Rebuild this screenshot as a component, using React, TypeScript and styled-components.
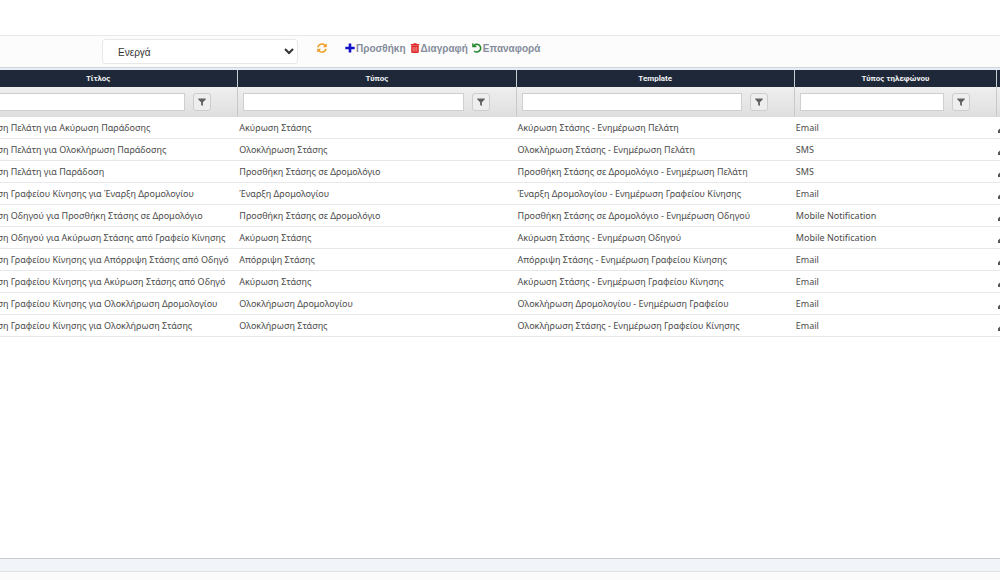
import React, { useState } from "react";
import styled, { createGlobalStyle } from "styled-components";

const GlobalStyle = createGlobalStyle`
  * { box-sizing: border-box; }
  body { margin: 0; background: #fff; font-family: "Liberation Sans", sans-serif; }
`;

const Page = styled.div`
  display: flex;
  flex-direction: column;
  min-height: 100vh;
`;

const TopBar = styled.header`
  height: 35px;
  background: #fff;
`;

const Toolbar = styled.div`
  display: flex;
  align-items: center;
  height: 33px;
  padding: 0 16px 0 102px;
  background: #fcfcfc;
  border-top: 1px solid #e9e9ea;
  border-bottom: 1px solid #d3d6da;
`;

const StatusSelect = styled.select`
  width: 196px;
  height: 25px;
  margin-right: 19px;
  padding: 1px 0 0 11px;
  border: 1px solid #e8e8ea;
  border-radius: 3px;
  background: #fff;
  color: #333;
  font: 10px "Liberation Sans", sans-serif;
`;

const ToolButton = styled.button<{ $gap: number }>`
  display: flex;
  align-items: center;
  gap: 1px;
  height: 24px;
  margin: 0 ${(p) => p.$gap}px 7px 0;
  padding: 0;
  border: 0;
  background: none;
  color: #858c9b;
  font: bold 10px "Liberation Sans", sans-serif;
  cursor: pointer;
`;

const GridArea = styled.main`
  flex: 1;
  overflow: hidden;
  border-top: 2px solid #e6edf4;
`;

const Grid = styled.table`
  width: calc(100% + 58px);
  margin-left: -41px;
  table-layout: fixed;
  border-collapse: separate;
  border-spacing: 0;
`;

const Col = styled.col<{ $width?: string }>`
  width: ${(p) => p.$width ?? "auto"};
`;

const HeadCell = styled.th`
  height: 17px;
  padding: 0;
  background: #1e2838;
  border-right: 1px solid #c9ced5;
  color: #f1f3f5;
  font: bold 8px/16px Roboto, sans-serif;
  text-align: center;
`;

const FilterCell = styled.td`
  height: 30px;
  padding: 0 26px 0 5px;
  background: linear-gradient(#efefef, #dfdfdf);
  border-right: 1px solid #c8c8c8;
  border-bottom: 1px solid #dcdcdc;
`;

const FilterRow = styled.div`
  display: flex;
  align-items: center;
  gap: 8px;
`;

const FilterInput = styled.input`
  flex: 1;
  min-width: 0;
  height: 18px;
  padding: 0 4px;
  border: 1px solid #cfcfcf;
  background: #fff;
  font: 9px "Noto Sans", sans-serif;
`;

const FilterButton = styled.button`
  display: flex;
  align-items: center;
  justify-content: center;
  width: 18px;
  height: 18px;
  padding: 0;
  border: 1px solid #cdcdcd;
  border-radius: 3px;
  background: #eeeeee;
  cursor: pointer;
`;

const Cell = styled.td`
  height: 22px;
  padding: 0 1px;
  border-bottom: 1px solid #e6e8ea;
  color: #4b4b4b;
  font: 9px/20px "Noto Sans", sans-serif;
  white-space: nowrap;
  overflow: hidden;
`;

const EditButton = styled.button`
  display: flex;
  padding: 2px 0 0;
  border: 0;
  background: none;
  color: #555;
`;

const StatusStrip = styled.div`
  height: 14px;
  background: #f1f4f9;
  border-top: 1px solid #c9cbce;
  border-bottom: 1px solid #dfe1e4;
`;

const Footer = styled.footer`
  height: 8px;
  background: #fbfbfb;
`;

const RefreshIcon = () => (
  <svg width="10" height="10" viewBox="0 0 512 512" fill="#f0a02c" aria-hidden="true">
    <path d="M371 134c-32-30-72-46-115-46-78 0-145 53-163 127-2 5-6 9-12 9H24c-8 0-13-7-12-14C33 94 134 8 256 8c66 0 127 26 171 68l36-35c15-15 41-5 41 17v134c0 13-11 24-24 24H346c-22 0-32-26-17-41zM32 296h134c22 0 32 26 17 41l-42 41c32 30 72 46 115 46 78 0 145-53 163-127 2-5 6-9 12-9h57c8 0 13 7 12 14-21 116-122 202-244 202-66 0-127-26-171-68l-36 35c-15 15-41 5-41-17V320c0-13 11-24 24-24z" />
  </svg>
);

const PlusIcon = () => (
  <svg width="10" height="10" viewBox="0 0 10 10" fill="#1111cc" aria-hidden="true">
    <path d="M4 .5h2q.3 0 .3.3v2.9h3q.4 0 .4.3v2q0 .3-.4.3h-3v2.9q0 .3-.3.3H4q-.3 0-.3-.3V6.3H.7q-.4 0-.4-.3V4q0-.3.4-.3h3V.8q0-.3.3-.3z" />
  </svg>
);

const TrashIcon = () => (
  <svg width="10" height="10" viewBox="0 0 10 10" aria-hidden="true">
    <path fill="#e02828" d="M.7 1h2.5l.5-.8h2.6l.5.8h2.5v1.2H.7zM1.2 2.6h7.6v6.5q0 .8-.8.8H2q-.8 0-.8-.8z" />
    <path stroke="#f7b4b4" strokeWidth=".7" d="M3.2 4v4.6M5 4v4.6M6.8 4v4.6" />
  </svg>
);

const UndoIcon = () => (
  <svg width="10" height="10" viewBox="0 0 10 10" fill="none" aria-hidden="true">
    <path fill="#24862f" d="M.2.3h1.2v2.4h3v1.6H.6q-.4 0-.4-.4z" />
    <path stroke="#24862f" strokeWidth="1.6" d="M1.4 3.2A3.9 3.9 0 1 1 2.1 8" />
  </svg>
);

const FunnelIcon = () => (
  <svg width="8" height="8" viewBox="0 0 8 8" fill="#606060" aria-hidden="true">
    <path d="M.3.5h7.4v1L4.9 4.2V8L3.1 7V4.2L.3 1.5z" />
  </svg>
);

const PencilIcon = () => (
  <svg width="9" height="9" viewBox="0 0 9 9" fill="currentColor" aria-hidden="true">
    <path d="M0 9V6.6L5.6 1 8 3.4 2.4 9zM6.2.5Q6.8 0 7.4.5l1.1 1.1q.5.6 0 1.2z" />
  </svg>
);

const columns = ["Τίτλος", "Τύπος", "Template", "Τύπος τηλεφώνου"];
const columnWidths = ["26.4%", "26.3%", "26.3%"];

const rows = [
  ["Ενημέρωση Πελάτη για Ακύρωση Παράδοσης", "Ακύρωση Στάσης", "Ακύρωση Στάσης - Ενημέρωση Πελάτη", "Email"],
  ["Ενημέρωση Πελάτη για Ολοκλήρωση Παράδοσης", "Ολοκλήρωση Στάσης", "Ολοκλήρωση Στάσης - Ενημέρωση Πελάτη", "SMS"],
  ["Ενημέρωση Πελάτη για Παράδοση", "Προσθήκη Στάσης σε Δρομολόγιο", "Προσθήκη Στάσης σε Δρομολόγιο - Ενημέρωση Πελάτη", "SMS"],
  ["Ενημέρωση Γραφείου Κίνησης για Έναρξη Δρομολογίου", "Έναρξη Δρομολογίου", "Έναρξη Δρομολογίου - Ενημέρωση Γραφείου Κίνησης", "Email"],
  ["Ενημέρωση Οδηγού για Προσθήκη Στάσης σε Δρομολόγιο", "Προσθήκη Στάσης σε Δρομολόγιο", "Προσθήκη Στάσης σε Δρομολόγιο - Ενημέρωση Οδηγού", "Mobile Notification"],
  ["Ενημέρωση Οδηγού για Ακύρωση Στάσης από Γραφείο Κίνησης", "Ακύρωση Στάσης", "Ακύρωση Στάσης - Ενημέρωση Οδηγού", "Mobile Notification"],
  ["Ενημέρωση Γραφείου Κίνησης για Απόρριψη Στάσης από Οδηγό", "Απόρριψη Στάσης", "Απόρριψη Στάσης - Ενημέρωση Γραφείου Κίνησης", "Email"],
  ["Ενημέρωση Γραφείου Κίνησης για Ακύρωση Στάσης από Οδηγό", "Ακύρωση Στάσης", "Ακύρωση Στάσης - Ενημέρωση Γραφείου Κίνησης", "Email"],
  ["Ενημέρωση Γραφείου Κίνησης για Ολοκλήρωση Δρομολογίου", "Ολοκλήρωση Δρομολογίου", "Ολοκλήρωση Δρομολογίου - Ενημέρωση Γραφείου", "Email"],
  ["Ενημέρωση Γραφείου Κίνησης για Ολοκλήρωση Στάσης", "Ολοκλήρωση Στάσης", "Ολοκλήρωση Στάσης - Ενημέρωση Γραφείου Κίνησης", "Email"],
];

export default function App() {
  const [status, setStatus] = useState("active");
  return (
    <Page>
      <GlobalStyle />
      <TopBar />
      <Toolbar>
        <StatusSelect aria-label="Κατάσταση" value={status} onChange={(e) => setStatus(e.target.value)}>
          <option value="active">Ενεργά</option>
        </StatusSelect>
        <ToolButton $gap={18} aria-label="Ανανέωση"><RefreshIcon /></ToolButton>
        <ToolButton $gap={4}><PlusIcon />Προσθήκη</ToolButton>
        <ToolButton $gap={4}><TrashIcon />Διαγραφή</ToolButton>
        <ToolButton $gap={0}><UndoIcon />Επαναφορά</ToolButton>
      </Toolbar>
      <GridArea>
        <Grid>
          <colgroup>
            {columnWidths.map((w, i) => <Col key={i} $width={w} />)}
            <Col />
            <Col $width="20px" />
          </colgroup>
          <thead>
            <tr>
              {columns.map((c) => <HeadCell key={c} scope="col">{c}</HeadCell>)}
              <HeadCell />
            </tr>
            <tr>
              {columns.map((c) => (
                <FilterCell key={c}>
                  <FilterRow>
                    <FilterInput type="text" aria-label={c} />
                    <FilterButton aria-label={`Φίλτρο ${c}`}><FunnelIcon /></FilterButton>
                  </FilterRow>
                </FilterCell>
              ))}
              <FilterCell />
            </tr>
          </thead>
          <tbody>
            {rows.map((row) => (
              <tr key={row[0]}>
                {row.map((text, i) => <Cell key={i}>{text}</Cell>)}
                <Cell><EditButton aria-label="Επεξεργασία"><PencilIcon /></EditButton></Cell>
              </tr>
            ))}
          </tbody>
        </Grid>
      </GridArea>
      <StatusStrip />
      <Footer />
    </Page>
  );
}
